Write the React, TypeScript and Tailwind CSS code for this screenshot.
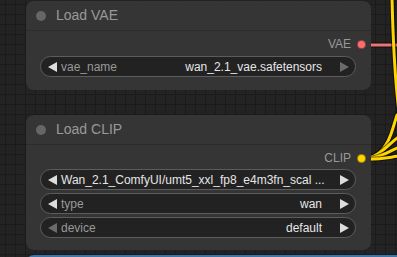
import type { ReactNode } from 'react'

const font = { fontFamily: '"Liberation Sans", Arial, sans-serif' }

function Arrow({ dir, dim }: { dir: 'left' | 'right'; dim?: boolean }) {
  const points = dir === 'left' ? '9,0 9,10 0,5' : '0,0 0,10 9,5'
  return (
    <svg width="9" height="10" viewBox="0 0 9 10" className="shrink-0">
      <polygon points={points} fill={dim ? '#6b6b6b' : '#dddddd'} />
    </svg>
  )
}

type WidgetProps = {
  label?: string
  value: string
  leftDim?: boolean
  rightDim?: boolean
}

function Widget({ label, value, leftDim, rightDim }: WidgetProps) {
  return (
    <div className="ml-[14px] mr-[15px] h-[21px] rounded-full border border-[#5c5c5c] bg-[#222222] flex items-center pl-[7px] pr-[6px] text-[12px] leading-[14px]">
      <Arrow dir="left" dim={leftDim} />
      {label && <span className="ml-[4px] text-[#999999] whitespace-nowrap">{label}</span>}
      <span className="flex-1 min-w-0 ml-[4px] text-right text-[#e6e6e6] whitespace-nowrap">
        {value}
      </span>
      <span className="ml-[18px] shrink-0 flex">
        <Arrow dir="right" dim={rightDim} />
      </span>
    </div>
  )
}

function Node({ title, output, dot, children, className }: { title: string; output: string; dot: string; children: ReactNode; className?: string }) {
  return (
    <div className={`relative z-10 w-[345px] rounded-lg bg-[#353535] ${className ?? ''}`}>
      <div className="h-[30px] flex items-center pl-[10px] border-b border-[#2c2c2c]">
        <span className="w-[10px] h-[10px] rounded-full bg-[#666666]" />
        <span className="ml-[10px] text-[14px] text-[#999999]">{title}</span>
      </div>
      <div className="mt-[5px] h-[16px] flex items-center justify-end pr-[5px] text-[12px] text-[#999999]">
        <span>{output}</span>
        <span className="ml-[6px] w-[9px] h-[9px] rounded-full border border-[#00000066]" style={{ background: dot }} />
      </div>
      {children}
    </div>
  )
}

export default function App() {
  return (
    <div
      className="relative w-[397px] h-[257px] overflow-hidden bg-[#232323] bg-[linear-gradient(to_right,#1b1b1b_1px,transparent_1px),linear-gradient(to_bottom,#1b1b1b_1px,transparent_1px)] [background-size:10px_10px] [background-position:5px_4px] pl-[26px] pt-[1px]"
      style={font}
    >
      {/* links */}
      <svg className="absolute inset-0" width="397" height="257" viewBox="0 0 397 257">
        <g fill="none" strokeLinecap="round">
          <path d="M362 45 L400 45" stroke="#000" strokeOpacity="0.55" strokeWidth="5" />
          <path d="M362 45 L400 45" stroke="#f07373" strokeWidth="3" />
          <path d="M392 -2 C393 40 395 80 399 112" stroke="#000" strokeOpacity="0.55" strokeWidth="5" />
          <path d="M392 -2 C393 40 395 80 399 112" stroke="#ffd500" strokeWidth="3" />
          {[
            'M363 159 C380 158 388 145 393 128 L397 115',
            'M363 159 C380 158 390 142 400 136',
            'M363 159 C380 159 390 150 400 147',
            'M363 159 C380 160 390 157 400 156',
          ].map((d) => (
            <g key={d}>
              <path d={d} stroke="#000" strokeOpacity="0.55" strokeWidth="5" />
              <path d={d} stroke="#ffd500" strokeWidth="3" />
            </g>
          ))}
        </g>
      </svg>

      <Node title="Load VAE" output="VAE" dot="#ff6e6e" className="h-[89px]">
        <div className="mt-[4px]">
          <Widget label="vae_name" value="wan_2.1_vae.safetensors" rightDim />
        </div>
      </Node>

      <Node title="Load CLIP" output="CLIP" dot="#ffd500" className="mt-[25px] h-[135px]">
        <div className="mt-[3px] flex flex-col gap-[3px]">
          <Widget value="Wan_2.1_ComfyUI/umt5_xxl_fp8_e4m3fn_scal ..." />
          <Widget label="type" value="wan" />
          <Widget label="device" value="default" leftDim />
        </div>
      </Node>

      <div className="relative z-10 mt-[5px] h-[10px] rounded-tl-lg border-t-2 border-[#3a78ac] bg-[#353535]" />
    </div>
  )
}
